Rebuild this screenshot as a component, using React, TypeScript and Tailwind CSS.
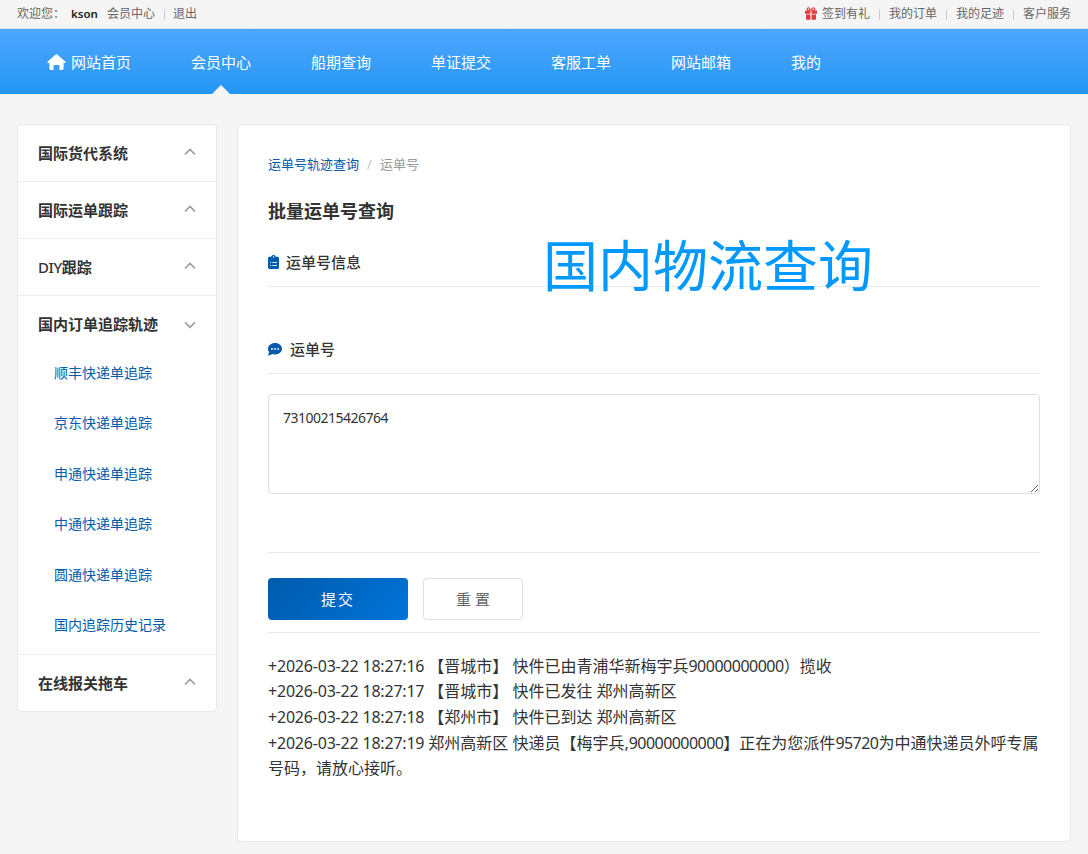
const navItems = ["网站首页", "会员中心", "船期查询", "单证提交", "客服工单", "网站邮箱", "我的"];

const menu = [
  { title: "国际货代系统" },
  { title: "国际运单跟踪" },
  { title: "DIY跟踪" },
  {
    title: "国内订单追踪轨迹",
    children: [
      "顺丰快递单追踪",
      "京东快递单追踪",
      "申通快递单追踪",
      "中通快递单追踪",
      "圆通快递单追踪",
      "国内追踪历史记录",
    ],
  },
  { title: "在线报关拖车" },
];

const records = [
  { time: "+2026-03-22 18:27:16", text: "【晋城市】 快件已由青浦华新梅宇兵", phone: "90000000000", rest: "）揽收" },
  { time: "+2026-03-22 18:27:17", text: "【晋城市】 快件已发往 郑州高新区" },
  { time: "+2026-03-22 18:27:18", text: "【郑州市】 快件已到达 郑州高新区" },
];

export default function App() {
  return (
    <div
      lang="zh-CN"
      className="min-h-[854px] w-[1088px] overflow-hidden bg-[#f5f5f5] font-['Noto_Sans','Noto_Sans_CJK_SC',sans-serif] text-[#333]"
    >
      <TopBar />
      <NavBar />
      <div className="flex items-start gap-5 pt-[30px] pl-[17px]">
        <Sidebar />
        <Content />
      </div>
    </div>
  );
}

function TopBar() {
  return (
    <div className="flex h-[29px] items-center justify-between border-b border-[#e5e5e5] px-[17px] text-xs text-[#666]">
      <div className="flex items-center">
        <span className="w-[54px]">欢迎您：</span>
        <b className="w-9 text-[11.5px] font-semibold text-[#222]">kson</b>
        <a>会员中心</a>
        <Divider />
        <a className="-ml-px">退出</a>
      </div>
      <div className="flex items-center">
        <GiftIcon />
        <a>签到有礼</a>
        <Divider />
        <a>我的订单</a>
        <Divider />
        <a>我的足迹</a>
        <Divider />
        <a>客户服务</a>
      </div>
    </div>
  );
}

function Divider() {
  return <span className="mx-[9px] mt-px h-[11px] w-px bg-[#ccccd4]" />;
}

function NavBar() {
  return (
    <nav className="flex h-[65px] bg-linear-to-b from-[#4da6ff] to-[#2196f3] pl-[17px] text-[15px] text-white">
      {navItems.map((item, i) => (
        <a key={item} className="relative flex items-center px-[30px] pt-px whitespace-nowrap">
          {i === 0 && <HomeIcon />}
          {item}
          {i === 1 && (
            <span className="absolute bottom-0 left-1/2 -ml-[9px] border-x-9 border-b-9 border-x-transparent border-b-[#f5f5f5]" />
          )}
        </a>
      ))}
    </nav>
  );
}

function Sidebar() {
  return (
    <aside className="w-[200px] rounded border border-[#e8e8e8] bg-white">
      {menu.map((item) => (
        <div key={item.title} className="border-b border-[#eee] last:border-b-0">
          <div className="flex h-14 items-center justify-between px-5 text-[15px] font-bold">
            {item.title === "DIY跟踪" ? (
              <span>
                <span className="font-medium tracking-[-0.4px]">DIY</span>跟踪
              </span>
            ) : (
              <span>{item.title}</span>
            )}
            <Chevron open={!!item.children} />
          </div>
          {item.children && (
            <ul className="-mt-[4.2px] pb-[4.2px] pl-9 text-sm text-[#005bac]">
              {item.children.map((child) => (
                <li key={child} className="flex h-[50.4px] items-center">
                  {child}
                </li>
              ))}
            </ul>
          )}
        </div>
      ))}
    </aside>
  );
}

function Chevron({ open }: { open: boolean }) {
  return (
    <svg className="h-3 w-3" viewBox="0 0 12 12" fill="none" stroke="#999" strokeWidth="1.6">
      <path d={open ? "M1 4.3l5 5 5-5" : "M1 7.5l5-5 5 5"} />
    </svg>
  );
}

function HomeIcon() {
  return (
    <svg className="mr-[5px] h-4 w-[19px]" viewBox="0 0 19 16" fill="currentColor">
      <path d="M8.8.4a1 1 0 0 1 1.4 0l8.1 7.1c.7.6.3 1.5-.5 1.5h-1.2v5.6c0 .8-.6 1.4-1.4 1.4h-2.7v-3.7c0-.8-.5-1.3-1.3-1.3H7.8c-.8 0-1.3.5-1.3 1.3V16H3.8c-.8 0-1.4-.6-1.4-1.4V9H1.2C.4 9 0 8.1.7 7.5z" />
    </svg>
  );
}

function GiftIcon() {
  return (
    <svg className="mr-[5px] mb-px h-[13px] w-3" viewBox="0 0 12 13" fill="#e4393c">
      <path
        d="M5.7 3.3H3.4a1.25 1.25 0 1 1 1.1-2zM6.3 3.3h2.3a1.25 1.25 0 1 0-1.1-2z"
        fill="none"
        stroke="#e4393c"
        strokeWidth="1.1"
      />
      <path d="M.8 3.5h4.6v3.2H0V4.3c0-.5.3-.8.8-.8zM6.6 3.5h4.6c.5 0 .8.3.8.8v2.4H6.6zM1 7.5h4.4v5.2H1.8c-.5 0-.8-.3-.8-.8zM6.6 7.5H11v4.4c0 .5-.3.8-.8.8H6.6z" />
    </svg>
  );
}

function ClipboardIcon() {
  return (
    <svg className="mr-[7px] mb-px h-[14px] w-[11px]" viewBox="0 0 11 14" fill="#005bac">
      <path
        fillRule="evenodd"
        d="M1.5 1.7h1.7a2.4 2.4 0 0 1 4.6 0h1.7c.8 0 1.5.7 1.5 1.5v9.3c0 .8-.7 1.5-1.5 1.5h-8C.7 14 0 13.3 0 12.5V3.2c0-.8.7-1.5 1.5-1.5zM5.5 1.3a.7.7 0 1 0 0 1.4.7.7 0 0 0 0-1.4z"
      />
      <path d="M2 7.5h1.2M4.4 7.5H9M2 10.5h1.2M4.4 10.5H9" stroke="#fff" strokeWidth="0.9" />
    </svg>
  );
}

function CommentIcon() {
  return (
    <svg className="mr-2 h-[13px] w-[14px]" viewBox="0 0 14 13">
      <path
        d="M7 0c3.9 0 7 2.6 7 5.8s-3.1 5.8-7 5.8c-1 0-2-.2-2.9-.5-.8.6-2.2 1.3-3.7 1.3-.4 0-.5-.4-.3-.7.5-.6 1-1.400 1.100-2.300C.5 8.400 0 7.200 0 5.800 0 2.600 3.100 0 7 0z"
        fill="#005bac"
      />
      <circle cx="3.9" cy="5.9" r="0.95" fill="#fff" />
      <circle cx="7" cy="5.9" r="0.95" fill="#fff" />
      <circle cx="10.1" cy="5.9" r="0.95" fill="#fff" />
    </svg>
  );
}

function Content() {
  return (
    <main className="relative h-[718px] w-[834px] rounded border border-[#e8e8e8] bg-white px-[30px] pt-[30px]">
      <div className="flex h-5 items-center text-[13px] text-[#999]">
        <a className="text-[#005bac]">运单号轨迹查询</a>
        <span className="w-[21px] text-center text-[#bbb]">/</span>
        <span>运单号</span>
      </div>
      <h1 className="mt-[22px] h-7 text-lg leading-7 font-bold">批量运单号查询</h1>
      <div className="mt-[13px] flex h-[49px] items-center border-b border-[#e8e8e8] text-[15px] font-medium">
        <ClipboardIcon />
        运单号信息
      </div>
      <div className="mt-[38px] flex h-[49px] items-center border-b border-[#e8e8e8] text-[15px] font-medium">
        <CommentIcon />
        运单号
      </div>
      <textarea
        className="mt-5 block h-[100px] w-[772px] rounded border border-[#dcdfe6] px-[14px] py-3 text-sm leading-[22px] tracking-[-0.5px] outline-none"
        defaultValue="73100215426764"
      />
      <div className="mt-[58px] flex h-[81px] gap-[15px] border-y border-[#e8e8e8] pt-[25px]">
        <button className="h-[42px] w-[140px] rounded bg-linear-135 from-[#005bac] to-[#0074d9] text-[15px] tracking-[2px] text-white">
          提交
        </button>
        <button className="h-[42px] w-[100px] rounded border border-[#dcdfe6] bg-white text-[15px] text-[#666]">
          重 置
        </button>
      </div>
      <div className="mt-[20.8px] text-base leading-[25.6px] whitespace-nowrap">
        {records.map((r) => (
          <p key={r.time}>
            <span className="tracking-[-0.2px]">{r.time} </span>
            {r.text}
            <span className="tracking-[-0.5px]">{r.phone}</span>
            {r.rest}
          </p>
        ))}
        <p>
          <span className="tracking-[-0.2px]">+2026-03-22 18:27:19 </span>
          郑州高新区 快递员【梅宇兵,<span className="tracking-[-0.55px]">90000000000</span>
          】正在为您派件<span className="tracking-[-0.55px]">95720</span>为中通快递员外呼专属
          <br />
          号码，请放心接听。
        </p>
      </div>
      <div className="absolute top-[100px] left-[305px] text-[55px] leading-[80px] whitespace-nowrap text-[#0099ff]">
        国内物流查询
      </div>
    </main>
  );
}
